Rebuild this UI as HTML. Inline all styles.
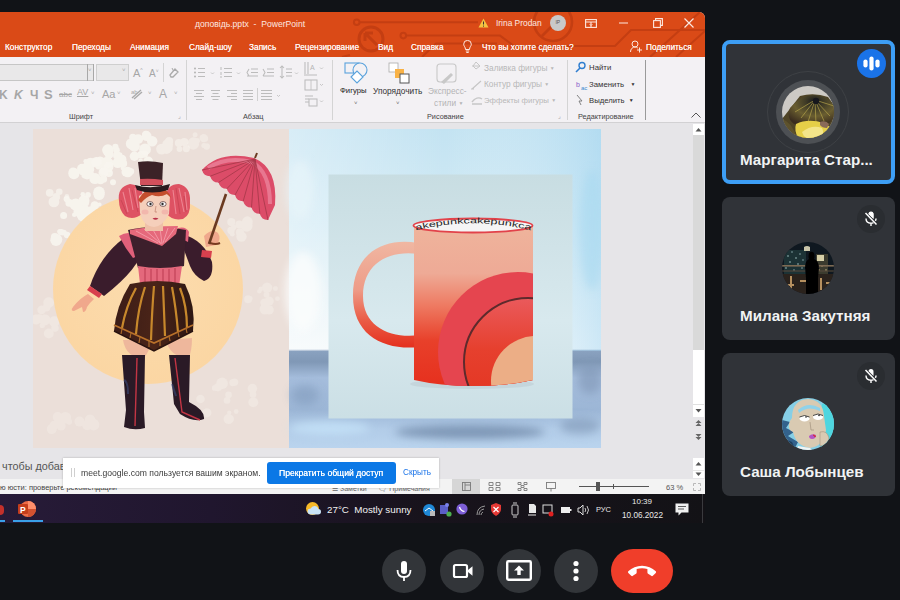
<!DOCTYPE html>
<html><head><meta charset="utf-8">
<style>
*{margin:0;padding:0;box-sizing:border-box}
html,body{width:900px;height:600px;overflow:hidden;background:#111317;font-family:"Liberation Sans",sans-serif}
.a{position:absolute}
#ppt{position:absolute;left:0;top:0;width:705px;height:494px;overflow:hidden}
#pptbg{position:absolute;left:0;top:12px;width:705px;height:482px;background:#e6e5e8;border-top-right-radius:6px}
#title{position:absolute;left:0;top:12px;width:705px;height:45px;background:#da4a17;border-top-right-radius:6px;overflow:hidden}
.tab{position:absolute;top:41px;font-size:8.3px;line-height:12px;color:#fff4ef;white-space:nowrap;text-shadow:0 0 0.5px #fff}
#ribbon{position:absolute;left:0;top:57px;width:705px;height:66px;background:#f3f1f4;border-bottom:1px solid #d2d1d3}
.rl{position:absolute;font-size:7.3px;color:#444;white-space:nowrap;line-height:10px}
.ch{font-size:5px;vertical-align:1px}
.gi{position:absolute;font-size:9px;color:#a6a6a6;white-space:nowrap}
.sep{position:absolute;width:1px;background:#d4d4d4}
#slide{position:absolute;left:33px;top:129px;width:568px;height:319px}
#status{position:absolute;left:0;top:479px;width:705px;height:15px;background:#f3f3f3}
#taskbar{position:absolute;left:0;top:494px;width:705px;height:29px;background:linear-gradient(90deg,#271b38 0%,#20162e 30%,#18131c 60%,#131216 100%)}
.tile{position:absolute;left:722px;width:173px;background:#303338;border-radius:8px}
.name{position:absolute;left:18px;font-size:14.5px;font-weight:bold;color:#f1f3f4;white-space:nowrap}
.btn{position:absolute;top:549px;width:44px;height:44px;border-radius:22px;background:#323539}
</style></head><body>

<div id="ppt">
  <div id="pptbg"></div>
  <div id="title">
    <svg class="a" style="left:0;top:0" width="705" height="45" viewBox="0 12 705 45" fill="none" stroke="#c43e12" stroke-width="2">
      <circle cx="356.7" cy="22.2" r="2.8"/><path d="M359.5 22.2H478"/>
      <circle cx="403.3" cy="35.6" r="2.8"/><path d="M406.1 35.6H500L514 46H615L631 30H705"/>
      <path d="M422 57L436 43.5H497"/>
      <path d="M342 57L350 55"/>
      <circle cx="371" cy="39" r="12" stroke-width="3"/><path d="M366 34l11 11M365 33v8M365 33h8" stroke-width="3"/>
      <circle cx="553" cy="22" r="19" stroke-width="2.6"/><path d="M542 36l20-20" stroke-width="2.6"/>
      <path d="M650 57L700 12"/>
      <path d="M676 57L705 31"/>
    </svg>
    <div class="a" style="left:195px;top:6px;font-size:8.6px;color:#fde8e0;white-space:nowrap;line-height:12px">доповідь.pptx&nbsp; - &nbsp;PowerPoint</div>
    <svg class="a" style="left:478px;top:6px" width="11" height="10" viewBox="0 0 11 10"><path d="M5.5 0.5L10.5 9.5H0.5Z" fill="#f5c242"/><path d="M5.5 3.5v3M5.5 7.6v1" stroke="#333" stroke-width="1"/></svg>
    <div class="a" style="left:496px;top:5px;font-size:8.4px;color:#fde8e0;white-space:nowrap;line-height:12px">Irina Prodan</div>
    <div class="a" style="left:550px;top:3px;width:15.5px;height:15.5px;border-radius:8px;background:#c9c9c9;font-size:5px;color:#555;text-align:center;line-height:15.5px">IP</div>
    <svg class="a" style="left:585px;top:7px" width="12" height="9" viewBox="0 0 12 9" fill="none" stroke="#fde8e0" stroke-width="1.1"><rect x="0.6" y="0.6" width="10.8" height="7.8"/><path d="M0.6 3h10.8M6 3v5.5" /><path d="M4.5 5l1.5 1.5 1.5-1.5" stroke-width="0.8"/></svg>
    <svg class="a" style="left:619px;top:10px" width="9" height="2"><path d="M0 1H9" stroke="#fde8e0" stroke-width="1.1"/></svg>
    <svg class="a" style="left:653px;top:6px" width="10" height="10" viewBox="0 0 10 10" fill="none" stroke="#fde8e0" stroke-width="1.1"><rect x="0.6" y="2.6" width="6.8" height="6.8"/><path d="M2.6 2.6V0.6h6.8v6.8H7.4"/></svg>
    <svg class="a" style="left:684px;top:6px" width="10" height="10" viewBox="0 0 10 10" fill="none" stroke="#fde8e0" stroke-width="1.2"><path d="M0.5 0.5l9 9M9.5 0.5l-9 9"/></svg>
  </div>
  <div class="tab" style="left:5px">Конструктор</div>
  <div class="tab" style="left:72px">Переходы</div>
  <div class="tab" style="left:130px">Анимация</div>
  <div class="tab" style="left:189px">Слайд-шоу</div>
  <div class="tab" style="left:249px">Запись</div>
  <div class="tab" style="left:295px">Рецензирование</div>
  <div class="tab" style="left:378px">Вид</div>
  <div class="tab" style="left:411px">Справка</div>
  <svg class="a" style="left:463px;top:40px" width="9" height="13" viewBox="0 0 9 13" fill="none" stroke="#fde8e0" stroke-width="1"><path d="M2.5 9.5C2.5 7 0.7 6.2 0.7 4.2a3.8 3.8 0 0 1 7.6 0c0 2-1.8 2.8-1.8 5.3zM2.8 11h3.4M3.3 12.5h2.4"/></svg>
  <div class="tab" style="left:482px">Что вы хотите сделать?</div>
  <svg class="a" style="left:630px;top:40px" width="13" height="13" viewBox="0 0 13 13" fill="none" stroke="#fde8e0" stroke-width="1"><circle cx="5" cy="4" r="3"/><path d="M0.5 12c0-3 2-5 4.5-5 1.2 0 2 .4 2.8 1M9.5 7.5v5M7 10h5"/></svg>
  <div class="tab" style="left:646px">Поделиться</div>
  <div id="ribbon"></div>
  <!-- font group -->
  <div class="a" style="left:-2px;top:64px;width:96px;height:17px;background:#e9e8e9;border:1px solid #c6c6c6;border-right:none"></div>
  <div class="a" style="left:87px;top:64px;width:1px;height:17px;background:#a8a8a8"></div>
  <div class="a" style="left:93px;top:64px;width:1px;height:17px;background:#a8a8a8"></div>
  <div class="a" style="left:96px;top:64px;width:33px;height:17px;background:#e9e8e9;border:1px solid #cfcfcf"></div>
  <div class="gi" style="left:88px;top:67px;font-size:6px">˅</div>
  <div class="gi" style="left:122px;top:67px;font-size:6px">˅</div>
  <div class="gi" style="left:133px;top:67px;font-size:11px">A<sup style="font-size:5px">^</sup></div>
  <div class="gi" style="left:149px;top:68px;font-size:10px">A<sup style="font-size:5px">˅</sup></div>
  <div class="sep" style="left:163px;top:63px;height:19px"></div>
  <svg class="a" style="left:169px;top:67px" width="11" height="11" viewBox="0 0 11 11" fill="none" stroke="#aaa" stroke-width="1.3"><path d="M1 8l5-6 3 3-5 5H2z"/><path d="M3 1l1.5 3" stroke-width="1"/></svg>
  <div class="gi" style="left:-1px;top:88px;font-size:12px;font-weight:bold">K</div>
  <div class="gi" style="left:14px;top:88px;font-size:12px;font-style:italic;font-weight:bold">K</div>
  <div class="gi" style="left:30px;top:88px;font-size:12px;font-weight:bold">Ч</div>
  <div class="gi" style="left:44px;top:87px;font-size:13px;font-weight:bold">S</div>
  <div class="gi" style="left:59px;top:90px;font-size:8px;text-decoration:line-through">abc</div>
  <div class="gi" style="left:77px;top:87px;font-size:9px;text-decoration:underline">AV</div>
  <div class="gi" style="left:91px;top:90px;font-size:6px">˅</div>
  <div class="gi" style="left:102px;top:88px;font-size:11px">Aa</div>
  <div class="gi" style="left:117px;top:90px;font-size:6px">˅</div>
  <svg class="a" style="left:130px;top:88px" width="13" height="12" viewBox="0 0 13 12" fill="none" stroke="#aaa" stroke-width="1.4"><path d="M2 10L11 2M4 11l8-7" /><text x="1" y="6" font-size="6" fill="#aaa" stroke="none" font-family="Liberation Sans">ab</text></svg>
  <div class="gi" style="left:148px;top:90px;font-size:6px">˅</div>
  <div class="gi" style="left:159px;top:87px;font-size:12px">A</div>
  <div class="gi" style="left:174px;top:90px;font-size:6px">˅</div>
  <div class="rl" style="left:69px;top:112px">Шрифт</div>
  <div class="gi" style="left:178px;top:112px;font-size:6px">⌟</div>
  <div class="sep" style="left:186px;top:60px;height:60px"></div>
  <!-- paragraph -->
  <svg class="a" style="left:190px;top:60px" width="145" height="60" viewBox="190 60 145 60" fill="none" stroke="#bcbcbc" stroke-width="1.05">
    <g fill="#b4b4b4" stroke="none"><circle cx="195" cy="68.5" r="1"/><circle cx="195" cy="72.5" r="1"/><circle cx="195" cy="76.5" r="1"/></g>
    <path d="M198 68.5h7M198 72.5h7M198 76.5h7"/>
    <path d="M211 72.5l1.5 1.5 1.5-1.5" stroke-width="0.8"/>
    <path d="M221 67v3M221 72v3M221 76v2" stroke-width="1"/>
    <path d="M224 68.5h8M224 72.5h8M224 76.5h8"/>
    <path d="M237 72.5l1.5 1.5 1.5-1.5" stroke-width="0.8"/>
    <path d="M251 69h7M251 72.5h7M247 76h11M249 69l-2 3.5 2 3.5"/>
    <path d="M267 69h7M267 72.5h7M263 76h11M263 69l2 3.5-2 3.5"/>
    <path d="M280 68l2-2 2 2M282 66v12M280 76l2 2 2-2M286 69h6M286 72.5h6M286 76h6"/>
    <path d="M295 72.5l1.5 1.5 1.5-1.5" stroke-width="0.8"/>
    <path d="M305 62v12M308 62v12M304 75h13"/><text x="310" y="70" font-size="7" fill="#b4b4b4" stroke="none" font-family="Liberation Sans">A</text>
    <path d="M320 67.5l1.5 1.5 1.5-1.5" stroke-width="0.8"/>
    <rect x="305" y="80" width="12" height="10"/><path d="M311 80v10" stroke-width="0.8"/>
    <path d="M320 84l1.5 1.5 1.5-1.5" stroke-width="0.8"/>
    <rect x="309" y="99" width="8" height="7"/><path d="M305 96h8M305 99h4M305 102h4"/>
    <path d="M320 100.5l1.5 1.5 1.5-1.5" stroke-width="0.8"/>
    <path d="M194 90.5h10M196 93.5h6M194 96.5h10M196 99.5h6"/>
    <path d="M211 90.5h9M212.5 93.5h6M211 96.5h9M212.5 99.5h6"/>
    <path d="M227 90.5h10M231 93.5h6M227 96.5h10M231 99.5h6"/>
    <path d="M243 90.5h10M243 93.5h10M243 96.5h10M243 99.5h10"/>
    <path d="M257.5 88v13" stroke="#d0d0d0"/>
    <path d="M261 90.5h11M261 93.5h11M261 96.5h11M261 99.5h11"/>
    <path d="M277 95l1.5 1.5 1.5-1.5" stroke-width="0.8"/>
  </svg>
  <div class="rl" style="left:243px;top:112px">Абзац</div>
  <div class="sep" style="left:332px;top:60px;height:60px"></div>
  <!-- drawing -->
  <svg class="a" style="left:340px;top:58px" width="230" height="64" viewBox="340 58 230 64" fill="none">
    <rect x="345" y="63" width="14" height="10" stroke="#5aa2dc" stroke-width="1.1"/>
    <circle cx="360" cy="70" r="7" stroke="#5aa2dc" stroke-width="1.1" fill="#f3f1f4"/>
    <path d="M351 77l6-6 6 6-6 6z" stroke="#5aa2dc" stroke-width="1.1" fill="#fff"/>
    <rect x="389" y="63" width="9" height="9" fill="#fff" stroke="#aaa" stroke-width="0.8"/>
    <rect x="395" y="69" width="9" height="9" fill="#f9b246"/>
    <rect x="400" y="74" width="9" height="9" fill="#fff" stroke="#555" stroke-width="1"/>
    <rect x="437" y="64" width="19" height="18" rx="3" stroke="#c8c8c8" stroke-width="1.1"/>
    <path d="M441 82l10-9 2 2-9 9z" fill="#c8c8c8"/>
    <path d="M476 62l4 4-4 3-3-3z M472 66h8" stroke="#c6c6c6" stroke-width="1"/>
    <path d="M472 89l9-8M471 89h3" stroke="#c6c6c6" stroke-width="1.2"/>
    <path d="M472 102c3-4 7-5 10-3M472 104h10" stroke="#c6c6c6" stroke-width="1.5"/>
  </svg>
  <div class="rl" style="left:340px;top:86px;font-size:7.7px;color:#222">Фигуры</div>
  <div class="rl" style="left:373px;top:86px;font-size:8.3px;color:#333">Упорядочить</div>
  <div class="rl" style="left:428px;top:86px;font-size:8.3px;color:#b4b4b4">Экспресс-</div>
  <div class="rl" style="left:434px;top:98px;font-size:8.3px;color:#b4b4b4">стили <span class="ch">▼</span></div>
  <div class="rl" style="left:354px;top:98px;font-size:6px;color:#666">˅</div>
  <div class="rl" style="left:396px;top:98px;font-size:6px;color:#666">˅</div>
  <div class="rl" style="left:484px;top:63px;font-size:8.3px;color:#b8b8b8">Заливка фигуры <span class="ch">▼</span></div>
  <div class="rl" style="left:484px;top:79px;font-size:8.3px;color:#b8b8b8">Контур фигуры <span class="ch">▼</span></div>
  <div class="rl" style="left:484px;top:95px;font-size:7.8px;color:#b8b8b8">Эффекты фигуры <span class="ch">▼</span></div>
  <div class="rl" style="left:427px;top:112px">Рисование</div>
  <div class="gi" style="left:558px;top:112px;font-size:6px">⌟</div>
  <div class="sep" style="left:567px;top:60px;height:60px"></div>
  <!-- editing -->
  <svg class="a" style="left:574px;top:60px" width="16" height="50" viewBox="574 60 16 50" fill="none">
    <circle cx="582" cy="65.5" r="3" stroke="#2f7ed0" stroke-width="1.4"/><path d="M580 68l-4 4" stroke="#2f7ed0" stroke-width="1.6"/>
    <text x="576" y="87" font-size="7" fill="#8a62c9" font-family="Liberation Sans">b</text><text x="581" y="90" font-size="6" fill="#3a8ad0" font-family="Liberation Sans">ac</text>
    <path d="M577 95l5 6h-3l2 4" stroke="#777" stroke-width="0.9"/>
  </svg>
  <div class="rl" style="left:589px;top:63px;font-size:7.8px;color:#333">Найти</div>
  <div class="rl" style="left:589px;top:79px;font-size:7.8px;color:#333">Заменить&nbsp;&nbsp;&nbsp;<span class="ch">▼</span></div>
  <div class="rl" style="left:589px;top:95px;font-size:7.7px;color:#333">Выделить&nbsp;&nbsp;<span class="ch">▼</span></div>
  <div class="rl" style="left:578px;top:112px">Редактирование</div>
  <div class="sep" style="left:645px;top:60px;height:60px;background:#9a9a9a"></div>
  <svg class="a" style="left:691px;top:112px" width="10" height="6"><path d="M0.5 5.5l4.5-4.5 4.5 4.5" fill="none" stroke="#555" stroke-width="1"/></svg>
  <svg id="slide" class="a" style="left:33px;top:129px" width="568" height="319" viewBox="33 129 568 319">
    <defs>
      <radialGradient id="sun" cx="0.5" cy="0.45" r="0.55"><stop offset="0" stop-color="#fcdcae"/><stop offset="1" stop-color="#fbd6a3"/></radialGradient>
      <linearGradient id="sky" x1="0" y1="0" x2="0" y2="1"><stop offset="0" stop-color="#c3e3f2"/><stop offset="0.3" stop-color="#d3ebf5"/><stop offset="0.55" stop-color="#e9f4f8"/><stop offset="0.69" stop-color="#f4f9fb"/><stop offset="0.695" stop-color="#8aa2c0"/><stop offset="0.73" stop-color="#8098b6"/><stop offset="0.78" stop-color="#a5bddc"/><stop offset="0.88" stop-color="#9cb6d6"/><stop offset="0.94" stop-color="#b2cce8"/><stop offset="1" stop-color="#bad4ee"/></linearGradient>
      <linearGradient id="skyh" x1="0" y1="0" x2="1" y2="0"><stop offset="0" stop-color="#ffffff" stop-opacity="0.35"/><stop offset="0.5" stop-color="#ffffff" stop-opacity="0"/><stop offset="1" stop-color="#9fd3f0" stop-opacity="0.45"/></linearGradient>
      <linearGradient id="photo" x1="0" y1="0" x2="0" y2="1"><stop offset="0" stop-color="#c8dde2"/><stop offset="0.6" stop-color="#d8e9ee"/><stop offset="1" stop-color="#cbdfe5"/></linearGradient>
      <linearGradient id="mug" x1="0" y1="0" x2="0" y2="1"><stop offset="0" stop-color="#efb49c"/><stop offset="0.3" stop-color="#eeaa96"/><stop offset="0.5" stop-color="#ee7a62"/><stop offset="0.72" stop-color="#e8402a"/><stop offset="1" stop-color="#e6301e"/></linearGradient>
      <linearGradient id="handle" x1="0" y1="0" x2="0" y2="1"><stop offset="0" stop-color="#f0b7a2"/><stop offset="0.45" stop-color="#ee9c88"/><stop offset="0.75" stop-color="#ea5a44"/><stop offset="1" stop-color="#e4301e"/></linearGradient>
      <linearGradient id="inner" x1="0" y1="0" x2="0" y2="1"><stop offset="0" stop-color="#ea5a5c"/><stop offset="0.4" stop-color="#e6402e"/><stop offset="1" stop-color="#e2301c"/></linearGradient>
      <clipPath id="mugclip"><path d="M414 225V380Q440 386 473 386Q506 386 533 380V225Z"/></clipPath>
      <linearGradient id="skirtg" x1="0" y1="0" x2="1" y2="0"><stop offset="0" stop-color="#3b1c17"/><stop offset="0.5" stop-color="#4a2418"/><stop offset="1" stop-color="#2e1713"/></linearGradient>
    </defs>
    <!-- clown image -->
    <rect x="33" y="129" width="256" height="319" fill="#ebdfd9"/>
    <filter id="soft" x="-20%" y="-20%" width="140%" height="140%"><feGaussianBlur stdDeviation="0.7"/></filter>
    <g fill="#f8f5ef" filter="url(#soft)">
      <g opacity="0.9">
        <circle cx="56.0" cy="240.2" r="5.7"/>
        <circle cx="56.3" cy="239.5" r="4.3"/>
        <circle cx="70.0" cy="244.6" r="4.5"/>
        <circle cx="67.1" cy="235.0" r="3.2"/>
        <circle cx="76.6" cy="242.9" r="4.8"/>
        <circle cx="79.4" cy="240.6" r="5.9"/>
        <circle cx="59.8" cy="231.5" r="2.6"/>
        <circle cx="76.1" cy="238.7" r="2.2"/>
        <circle cx="68.5" cy="242.6" r="2.1"/>
        <circle cx="56.9" cy="239.5" r="5.4"/>
        <circle cx="54.9" cy="237.0" r="4.0"/>
        <circle cx="61.1" cy="232.2" r="3.1"/>
        <circle cx="80.0" cy="237.9" r="5.4"/>
        <circle cx="63.9" cy="232.6" r="2.9"/>
      </g>
      <g opacity="0.95">
        <circle cx="78.6" cy="211.6" r="5.1"/>
        <circle cx="63.6" cy="215.5" r="3.5"/>
        <circle cx="99.6" cy="204.6" r="2.0"/>
        <circle cx="85.3" cy="220.9" r="3.9"/>
        <circle cx="93.8" cy="206.9" r="2.3"/>
        <circle cx="66.7" cy="199.0" r="3.1"/>
        <circle cx="90.8" cy="212.2" r="5.9"/>
        <circle cx="80.4" cy="203.2" r="3.0"/>
        <circle cx="84.3" cy="210.0" r="5.2"/>
        <circle cx="87.2" cy="217.4" r="3.8"/>
        <circle cx="86.9" cy="219.2" r="2.5"/>
        <circle cx="75.3" cy="204.2" r="3.7"/>
        <circle cx="82.6" cy="215.1" r="5.9"/>
        <circle cx="84.0" cy="200.7" r="5.5"/>
        <circle cx="83.4" cy="216.5" r="5.4"/>
        <circle cx="75.6" cy="204.6" r="6.0"/>
        <circle cx="82.6" cy="214.9" r="5.1"/>
        <circle cx="74.3" cy="214.7" r="2.3"/>
        <circle cx="94.2" cy="213.7" r="3.0"/>
        <circle cx="69.2" cy="202.9" r="3.8"/>
        <circle cx="94.8" cy="205.5" r="4.3"/>
        <circle cx="86.3" cy="203.5" r="2.6"/>
      </g>
      <g opacity="0.95">
        <circle cx="108.7" cy="169.1" r="3.0"/>
        <circle cx="99.0" cy="192.4" r="5.8"/>
        <circle cx="99.1" cy="194.6" r="5.5"/>
        <circle cx="80.6" cy="170.9" r="2.4"/>
        <circle cx="113.0" cy="182.3" r="3.0"/>
        <circle cx="88.9" cy="169.2" r="5.3"/>
        <circle cx="82.2" cy="172.4" r="2.7"/>
        <circle cx="90.9" cy="173.4" r="2.9"/>
        <circle cx="73.1" cy="171.9" r="4.5"/>
        <circle cx="88.0" cy="194.9" r="2.8"/>
        <circle cx="103.4" cy="179.0" r="3.8"/>
        <circle cx="100.6" cy="180.8" r="3.5"/>
        <circle cx="84.8" cy="175.1" r="3.4"/>
        <circle cx="108.9" cy="166.7" r="4.6"/>
        <circle cx="85.9" cy="165.2" r="2.6"/>
        <circle cx="94.9" cy="178.5" r="5.6"/>
        <circle cx="85.5" cy="161.2" r="2.1"/>
        <circle cx="82.0" cy="168.6" r="4.9"/>
        <circle cx="82.8" cy="194.3" r="2.3"/>
        <circle cx="73.9" cy="173.6" r="5.6"/>
        <circle cx="90.5" cy="163.0" r="5.2"/>
        <circle cx="103.2" cy="172.6" r="4.7"/>
        <circle cx="108.7" cy="168.2" r="3.7"/>
        <circle cx="97.2" cy="161.8" r="4.3"/>
        <circle cx="82.4" cy="170.1" r="4.3"/>
        <circle cx="87.2" cy="174.8" r="4.6"/>
      </g>
      <g opacity="0.95">
        <circle cx="148.2" cy="161.4" r="4.9"/>
        <circle cx="103.7" cy="170.8" r="4.3"/>
        <circle cx="98.1" cy="167.3" r="2.3"/>
        <circle cx="122.0" cy="159.2" r="4.4"/>
        <circle cx="108.7" cy="162.9" r="4.8"/>
        <circle cx="100.1" cy="162.2" r="5.7"/>
        <circle cx="121.9" cy="163.7" r="3.2"/>
        <circle cx="116.5" cy="155.5" r="2.7"/>
        <circle cx="140.9" cy="154.7" r="3.8"/>
        <circle cx="134.4" cy="156.2" r="4.7"/>
        <circle cx="127.8" cy="172.0" r="5.2"/>
        <circle cx="144.5" cy="154.3" r="3.5"/>
        <circle cx="108.3" cy="157.5" r="2.5"/>
        <circle cx="96.4" cy="162.3" r="5.4"/>
        <circle cx="115.4" cy="146.9" r="3.1"/>
        <circle cx="131.1" cy="171.4" r="3.1"/>
        <circle cx="126.0" cy="172.0" r="4.5"/>
        <circle cx="106.3" cy="162.3" r="5.4"/>
        <circle cx="140.7" cy="160.8" r="2.3"/>
        <circle cx="147.6" cy="164.9" r="2.2"/>
        <circle cx="116.6" cy="150.3" r="3.2"/>
        <circle cx="123.0" cy="159.9" r="2.5"/>
        <circle cx="117.8" cy="162.7" r="5.3"/>
        <circle cx="122.8" cy="168.0" r="2.2"/>
        <circle cx="109.1" cy="154.2" r="4.5"/>
        <circle cx="107.9" cy="150.1" r="5.8"/>
        <circle cx="117.0" cy="155.5" r="3.9"/>
        <circle cx="123.3" cy="163.5" r="3.9"/>
        <circle cx="119.4" cy="155.4" r="3.1"/>
        <circle cx="108.8" cy="173.0" r="4.1"/>
      </g>
      <g opacity="0.9">
        <circle cx="132.8" cy="137.4" r="3.6"/>
        <circle cx="145.5" cy="134.6" r="2.3"/>
        <circle cx="152.8" cy="139.2" r="2.5"/>
        <circle cx="131.4" cy="143.8" r="5.6"/>
        <circle cx="134.4" cy="146.2" r="5.5"/>
        <circle cx="145.9" cy="134.6" r="3.9"/>
        <circle cx="138.3" cy="139.1" r="4.9"/>
        <circle cx="146.7" cy="136.2" r="4.9"/>
        <circle cx="145.0" cy="149.4" r="5.9"/>
        <circle cx="152.2" cy="141.2" r="5.2"/>
      </g>
      <g opacity="0.7">
        <circle cx="53.9" cy="201.9" r="5.4"/>
        <circle cx="56.3" cy="196.9" r="3.8"/>
        <circle cx="49.7" cy="192.8" r="3.9"/>
        <circle cx="66.9" cy="196.3" r="2.3"/>
        <circle cx="59.3" cy="191.8" r="3.3"/>
        <circle cx="58.9" cy="192.1" r="2.6"/>
      </g>
      <g opacity="0.6">
        <circle cx="161.5" cy="149.1" r="5.4"/>
        <circle cx="169.2" cy="141.0" r="4.0"/>
        <circle cx="179.5" cy="149.1" r="2.9"/>
        <circle cx="166.5" cy="149.1" r="4.9"/>
        <circle cx="167.6" cy="144.5" r="5.4"/>
        <circle cx="166.7" cy="147.9" r="3.5"/>
        <circle cx="183.6" cy="142.2" r="2.8"/>
        <circle cx="184.3" cy="142.1" r="4.1"/>
        <circle cx="168.6" cy="148.0" r="4.1"/>
        <circle cx="162.6" cy="149.8" r="2.1"/>
        <circle cx="186.3" cy="148.6" r="3.6"/>
        <circle cx="178.8" cy="142.9" r="4.0"/>
      </g>
      <g opacity="0.45">
        <circle cx="203.7" cy="138.1" r="4.2"/>
        <circle cx="193.3" cy="144.0" r="5.7"/>
        <circle cx="203.8" cy="145.5" r="2.5"/>
        <circle cx="193.4" cy="142.9" r="5.6"/>
        <circle cx="197.2" cy="140.7" r="2.8"/>
        <circle cx="195.1" cy="134.8" r="2.5"/>
        <circle cx="205.4" cy="138.8" r="2.8"/>
        <circle cx="206.7" cy="146.6" r="3.3"/>
      </g>
      <g opacity="0.45">
        <circle cx="232.3" cy="234.2" r="2.4"/>
        <circle cx="239.3" cy="224.5" r="4.0"/>
        <circle cx="240.0" cy="232.4" r="4.1"/>
        <circle cx="231.0" cy="230.4" r="3.7"/>
        <circle cx="233.7" cy="227.3" r="2.8"/>
        <circle cx="231.3" cy="222.1" r="4.1"/>
        <circle cx="247.4" cy="221.7" r="5.4"/>
        <circle cx="241.5" cy="236.6" r="5.2"/>
        <circle cx="247.4" cy="224.8" r="3.3"/>
        <circle cx="246.6" cy="225.8" r="6.0"/>
      </g>
      <g opacity="0.35">
        <circle cx="266.5" cy="294.8" r="3.0"/>
        <circle cx="260.8" cy="288.9" r="2.4"/>
        <circle cx="267.1" cy="287.6" r="5.2"/>
        <circle cx="269.1" cy="309.9" r="4.7"/>
        <circle cx="269.1" cy="301.1" r="4.7"/>
        <circle cx="275.4" cy="288.6" r="2.5"/>
        <circle cx="248.1" cy="299.3" r="4.0"/>
        <circle cx="259.3" cy="291.2" r="2.3"/>
        <circle cx="264.4" cy="302.6" r="4.2"/>
        <circle cx="250.0" cy="298.5" r="2.6"/>
        <circle cx="264.9" cy="309.1" r="5.4"/>
        <circle cx="277.4" cy="298.7" r="2.4"/>
      </g>
      <g opacity="0.35">
        <circle cx="55.0" cy="328.1" r="3.8"/>
        <circle cx="46.5" cy="307.5" r="3.9"/>
        <circle cx="39.5" cy="318.6" r="4.4"/>
        <circle cx="54.3" cy="321.5" r="5.4"/>
        <circle cx="48.8" cy="333.5" r="5.0"/>
        <circle cx="42.3" cy="325.4" r="2.7"/>
        <circle cx="44.8" cy="319.8" r="5.6"/>
        <circle cx="48.7" cy="302.5" r="5.4"/>
        <circle cx="41.6" cy="309.8" r="4.4"/>
        <circle cx="36.1" cy="319.4" r="5.2"/>
      </g>
      <g opacity="0.35">
        <circle cx="228.5" cy="419.1" r="5.0"/>
        <circle cx="234.7" cy="382.2" r="3.6"/>
        <circle cx="252.4" cy="388.6" r="4.8"/>
        <circle cx="232.8" cy="382.6" r="3.6"/>
        <circle cx="228.6" cy="394.8" r="3.4"/>
        <circle cx="227.0" cy="400.4" r="3.4"/>
        <circle cx="214.7" cy="387.9" r="2.9"/>
        <circle cx="253.0" cy="394.4" r="3.4"/>
        <circle cx="217.8" cy="387.3" r="4.1"/>
        <circle cx="206.9" cy="412.8" r="4.6"/>
        <circle cx="222.1" cy="383.4" r="5.9"/>
        <circle cx="253.3" cy="402.2" r="5.0"/>
        <circle cx="229.2" cy="412.7" r="2.2"/>
        <circle cx="236.2" cy="411.5" r="2.4"/>
        <circle cx="229.8" cy="419.0" r="4.2"/>
        <circle cx="200.5" cy="399.0" r="4.3"/>
      </g>
      <g opacity="0.3">
        <circle cx="90.0" cy="419.6" r="5.2"/>
        <circle cx="87.2" cy="425.3" r="5.0"/>
        <circle cx="93.1" cy="424.0" r="2.6"/>
        <circle cx="59.9" cy="421.1" r="4.0"/>
        <circle cx="65.4" cy="417.7" r="5.8"/>
        <circle cx="54.1" cy="425.2" r="4.4"/>
        <circle cx="61.1" cy="426.0" r="4.6"/>
        <circle cx="57.6" cy="417.0" r="4.9"/>
        <circle cx="69.2" cy="421.7" r="3.0"/>
        <circle cx="79.5" cy="421.6" r="5.0"/>
        <circle cx="51.8" cy="429.1" r="5.0"/>
        <circle cx="93.6" cy="424.6" r="5.8"/>
      </g>
    </g>
    <circle cx="148" cy="289" r="95" fill="url(#sun)"/>
    <!-- left arm -->
    <path d="M124 238Q138 232 144 246Q140 268 104 296L90 286Q100 256 124 238Z" fill="#3a1c2c"/>
    <path d="M119 236q10-6 17 0l2 20-5 2q-8-10-14-22z" fill="#e0607a"/>
    <path d="M90 286l12 8l-3 4l-12-8z" fill="#d8404e"/>
    <path d="M88 294q-8 4-15 13q-3 4 1 4l8-4l1 5q3 0 4-5l3-4 4-4z" fill="#f0a88c"/>
    <!-- right arm -->
    <path d="M182 234Q204 240 212 262Q214 278 204 281Q194 276 190 266L184 250Z" fill="#3a1c2c"/>
    <path d="M178 228q8-2 11 4l-1 10-8-4z" fill="#e0607a"/>
    <path d="M202 250l10 1l-1 7l-10-1z" fill="#d8404e"/>
    <path d="M204 236q8-8 14-3q4 6-2 12l-10 2z" fill="#f0a88c"/>
    <path d="M210 243q6 2 10 0" stroke="#7a3a20" stroke-width="2"/>
    <!-- umbrella -->
    <path d="M226 194L209 244" stroke="#6b3a20" stroke-width="2.6"/>
    <path d="M202 170Q220 150 254 158Q278 168 275 205L268 220Q261.5 220.1 259.8 213.8Q253.2 213.8 251.5 207.5Q245.0 207.6 243.2 201.2Q236.7 201.3 235.0 195.0Q228.5 195.1 226.8 188.8Q220.2 188.8 218.5 182.5Q212.0 182.6 210.2 176.2Q203.7 176.3 202.0 170.0Z" fill="#dc4c68"/>
    <path d="M208 168Q226 156 252 162Q270 172 270 204" fill="none" stroke="#f29ab0" stroke-width="4" opacity="0.55"/>
    <path d="M255 159L268.0 220.0M255 159L259.8 213.8M255 159L251.5 207.5M255 159L243.2 201.2M255 159L235.0 195.0M255 159L226.8 188.8M255 159L218.5 182.5M255 159L210.2 176.2M255 159L202.0 170.0" stroke="#a8384a" stroke-width="1" fill="none" opacity="0.85"/>
    <path d="M255 158l2-5" stroke="#6b3a20" stroke-width="2"/>
    <!-- torso -->
    <path d="M128 230Q154 224 186 230L184 266Q162 272 138 268Z" fill="#3d1f2c"/>
    <!-- corset -->
    <path d="M138 266Q160 270 182 266L178 293H141Z" fill="#e4687c"/>
    <g stroke="#b7354c" stroke-width="0.9"><path d="M145 268v24M151 269v24M157 269v24M163 269v24M169 269v24M175 268v24"/></g>
    <!-- ruff -->
    <path d="M130 230Q150 226 178 226L176 234L162 246Q146 240 130 234Z" fill="#e5697b"/>
    <g stroke="#f6a3b0" stroke-width="1" opacity="0.8"><path d="M136 231l22 12M144 229l16 14M152 228l9 16M160 228l2 16M168 228l-5 15M175 228l-10 14"/></g>
    <!-- thighs -->
    <path d="M123 340Q126 358 144 358Q150 350 152 340Z" fill="#eeb79c"/>
    <path d="M166 340Q170 358 189 357Q192 350 192 338Z" fill="#eeb79c"/>
    <!-- skirt -->
    <path d="M130 284Q157 278 185 284Q196 306 193 331L154 351L114 331Q116 306 130 284Z" fill="url(#skirtg)"/>
    <g stroke="#c7882c" stroke-width="2.2" fill="none"><path d="M136 288Q126 306 122 328M145 287Q138 308 136 334M154 286Q152 310 151 340M163 286Q164 310 165 336M172 287Q176 308 178 332M180 288Q187 306 187 328"/></g>
    <path d="M114 325L154 343L193 325" stroke="#b8702a" stroke-width="1.6" fill="none"/>
    <path d="M114 331L154 351L193 331" stroke="#2a1410" stroke-width="1.5" fill="none"/>
    <g stroke="#a9692a" stroke-width="1.2"><path d="M122 329l-1 5M131 333l-1 5M140 337l-1 6M149 341l0 6M160 340l0 6M169 336l1 5M178 332l1 5M186 328l1 5"/></g>
    <!-- boots -->
    <path d="M122 355H145L144 412L145 428Q134 431 124 427L126 410Z" fill="#2a1a26"/>
    <path d="M124 380q4 2 4 14" stroke="#3a4a7a" stroke-width="2" opacity="0.6"/>
    <path d="M137 358L135 426" stroke="#c33544" stroke-width="1.4"/>
    <path d="M169 355H190L189 402Q205 410 204 419Q194 423 180 414L174 404Z" fill="#2a1a26"/>
    <path d="M172 384q2 6 4 12" stroke="#3a4a7a" stroke-width="2" opacity="0.6"/>
    <path d="M175 358L182 412l18 8" stroke="#c33544" stroke-width="1.4" fill="none"/>
    <!-- head -->
    <path d="M119 201Q117 187 130 184Q141 185 143 195L142 214Q133 221 125 216Q119 210 119 201Z" fill="#de5263"/>
    <path d="M166 196Q167 184 179 184Q191 187 190 202Q191 215 183 219Q172 221 167 214Z" fill="#de5263"/>
    <g stroke="#f49aa6" stroke-width="1.1" opacity="0.7"><path d="M123 192l5 20M129 188l4 22M135 188l3 20M173 190l3 24M179 188l5 24M185 192l2 18"/></g>
    <g stroke="#b83848" stroke-width="0.8" opacity="0.6"><path d="M121 200l6 14M132 190l6 22M176 188l4 26M184 196l2 16"/></g>
    <path d="M145 222h18v9h-18z" fill="#efc0a8"/>
    <path d="M139 196Q154 184 170 196L169 214Q162 227 154 227Q143 226 140 213Z" fill="#f5cfbb"/>
    <ellipse cx="145" cy="212" rx="3.5" ry="2.5" fill="#f0a0a0" opacity="0.5"/><ellipse cx="165" cy="212" rx="3.5" ry="2.5" fill="#f0a0a0" opacity="0.5"/>
    <path d="M138 200Q146 186 158 187Q168 188 171 198L167 194Q160 198 152 195Q146 197 141 203Z" fill="#c44e2e"/>
    <ellipse cx="150" cy="204" rx="3.2" ry="2.4" fill="#fff" stroke="#4a2a2a" stroke-width="0.7"/><ellipse cx="163" cy="204" rx="3.2" ry="2.4" fill="#fff" stroke="#4a2a2a" stroke-width="0.7"/>
    <circle cx="150.5" cy="204" r="1.2" fill="#2a2a2a"/><circle cx="162.5" cy="204" r="1.2" fill="#2a2a2a"/>
    <path d="M156 206l-1 6h2" stroke="#c08070" stroke-width="0.7" fill="none"/>
    <path d="M152.5 218.5q3 -1.5 6 0q-3 2.5-6 0z" fill="#b8324a"/>
    <!-- hat -->
    <path d="M138 162Q150 160 163 163L162 186H141Z" fill="#3b2227"/>
    <path d="M140 179Q151 178 163 180L163 185H140Z" fill="#d2505c"/>
    <path d="M135 185Q152 190 170 184L168 190Q152 195 137 190Z" fill="#2a1a1e"/>

    <!-- mug image -->
    <rect x="289" y="129" width="312" height="319" fill="url(#sky)"/>
    <rect x="289" y="129" width="312" height="222" fill="url(#skyh)"/>
    <filter id="blur4" x="-50%" y="-50%" width="200%" height="200%"><feGaussianBlur stdDeviation="4"/></filter>
    <g filter="url(#blur4)">
      <ellipse cx="303" cy="292" rx="18" ry="40" fill="#fbfdfd" opacity="0.8"/>
      <ellipse cx="300" cy="190" rx="14" ry="30" fill="#e9f5fa" opacity="0.6"/>
      <ellipse cx="592" cy="230" rx="12" ry="60" fill="#a9d8f0" opacity="0.6"/>
      <ellipse cx="470" cy="432" rx="75" ry="7" fill="#6e86a6" opacity="0.75"/>
      <ellipse cx="330" cy="428" rx="40" ry="7" fill="#c4e2f8" opacity="0.8"/>
      <ellipse cx="580" cy="426" rx="20" ry="8" fill="#7e96b6" opacity="0.6"/>
      <ellipse cx="305" cy="395" rx="14" ry="10" fill="#7d96b8" opacity="0.5"/>
      <ellipse cx="590" cy="380" rx="12" ry="14" fill="#7f95b4" opacity="0.6"/>
    </g>
    <rect x="328.5" y="174.5" width="244" height="244" fill="url(#photo)"/>
    <ellipse cx="472" cy="384" rx="62" ry="5" fill="#c2d2d8" opacity="0.8"/>
    <!-- handle -->
    <path d="M418 243C385 237 353 252 353 296C353 336 385 351 420 347L420 335C392 339 363 328 363 296C363 264 388 250 418 254Z" fill="url(#handle)"/>
    <!-- body -->
    <path d="M414 225V380Q440 386 473 386Q506 386 533 380V225Z" fill="url(#mug)"/>
    <g clip-path="url(#mugclip)">
      <circle cx="518" cy="352" r="80" fill="#e5454f"/>
      <circle cx="528" cy="362" r="64" fill="url(#inner)" stroke="#5e2a2c" stroke-width="2"/>
      <circle cx="536" cy="381" r="45" fill="#ecae86"/>
    </g>
    <ellipse cx="473" cy="225.5" rx="59.5" ry="7" fill="#f5f5f5" stroke="#e2424a" stroke-width="1.8"/>
    <path id="rimtext" d="M416 230.5Q473 216 531 230.5" fill="none"/>
    <text font-size="8" fill="#262626" font-family="Liberation Sans"><textPath href="#rimtext" textLength="116" lengthAdjust="spacingAndGlyphs">akepunkcakepunkca</textPath></text>
  </svg>
  <div id="status"></div>
  <div class="a" style="left:2px;top:459px;font-size:10.8px;color:#555;white-space:nowrap;line-height:14px">чтобы добав</div>
  <div class="a" style="left:0px;top:483px;font-size:7.5px;color:#444;white-space:nowrap;line-height:10px">ю юсти: проверьте рекомендации</div>
  <div class="a" style="left:332px;top:484px;font-size:7px;color:#666;white-space:nowrap;line-height:10px">☰ Заметки&nbsp;&nbsp;&nbsp;&nbsp;&nbsp;&nbsp;🗨 Примечания</div>
  <div class="a" style="left:452px;top:479px;width:28px;height:15px;background:#d6d6d6"></div>
  <svg class="a" style="left:460px;top:481px" width="100" height="11" viewBox="460 481 100 11" fill="none" stroke="#7a7a7a" stroke-width="0.9">
    <rect x="462.5" y="482.5" width="8" height="8"/><path d="M465 482.5v8M465 485h5.5"/>
    <path d="M489 482.5h4v3h-4zM496 482.5h4v3h-4zM489 487.5h4v3h-4zM496 487.5h4v3h-4z"/>
    <path d="M518 482.5h3v2h-3zM524 482.5h3v2h-3zM518 488.5h3v2h-3zM524 488.5h3v2h-3zM521 485.5h3v2h-3z"/>
    <rect x="546.5" y="482.5" width="9" height="6"/><path d="M551 488.5v3"/>
  </svg>
  <div class="a" style="left:579px;top:486px;width:70px;height:1px;background:#555"></div>
  <div class="a" style="left:596px;top:482px;width:4px;height:9px;background:#555"></div>
  <div class="a" style="left:613px;top:484px;width:1px;height:5px;background:#555"></div>
  <div class="a" style="left:666px;top:483px;font-size:7.5px;color:#555;white-space:nowrap;line-height:10px">63 %</div>
  <svg class="a" style="left:693px;top:483px" width="8" height="8" viewBox="0 0 8 8" fill="none" stroke="#aaa" stroke-width="0.8"><path d="M0.5 3V0.5H3M5 0.5h2.5V3M7.5 5v2.5H5M3 7.5H0.5V5"/></svg>
  <!-- scrollbar -->
  <div class="a" style="left:693px;top:124px;width:11px;height:293px;background:#fff"></div>
  <div class="a" style="left:693px;top:135px;width:11px;height:215px;background:#d9d9d9"></div>
  <div class="a" style="left:693px;top:404px;width:11px;height:1px;background:#e0e0e0"></div>
  <div class="a" style="left:693px;top:458px;width:11px;height:20px;background:#fff"></div>
  <div class="a" style="left:693px;top:470px;width:11px;height:1px;background:#e6e6e6"></div>
  <svg class="a" style="left:693px;top:124px" width="11" height="354" viewBox="693 124 11 354" fill="#555">
    <path d="M695.5 131.5l3-3.5 3 3.5z"/>
    <path d="M695.5 409l3 3.5 3-3.5z"/>
    <path d="M695.5 423l3-3 3 3zM695.5 426l3-3 3 3z" fill="#666"/>
    <path d="M695.5 434l3 3 3-3zM695.5 437l3 3 3-3z" fill="#666"/>
    <path d="M695.5 465.5l3-3.5 3 3.5z"/>
    <path d="M695.5 472.5l3 3.5 3-3.5z"/>
  </svg>
</div>
<!-- popup -->
<div class="a" style="left:63px;top:458px;width:376px;height:30px;background:#fff;box-shadow:0 0 2px rgba(0,0,0,0.25)"></div>
<div class="a" style="left:71px;top:468px;width:1px;height:9px;background:#cfcfcf"></div>
<div class="a" style="left:74px;top:468px;width:1px;height:9px;background:#cfcfcf"></div>
<div class="a" style="left:81px;top:467px;font-size:8.6px;color:#3c3c3c;white-space:nowrap;line-height:12px">meet.google.com пользуется вашим экраном.</div>
<div class="a" style="left:267px;top:462px;width:129px;height:22px;background:#0b78e6;border-radius:3px"></div>
<div class="a" style="left:279px;top:467px;font-size:8.6px;color:#fff;white-space:nowrap;line-height:12px;text-shadow:0 0 0.4px #fff">Прекратить общий доступ</div>
<div class="a" style="left:403px;top:467px;font-size:8.2px;color:#1a73e8;white-space:nowrap;line-height:12px">Скрыть</div>
<!-- taskbar -->
<div id="taskbar"></div>
<div class="a" style="left:-4px;top:505px;width:8px;height:10px;border-radius:4px;background:#c4312b"></div>
<div class="a" style="left:0px;top:520px;width:5px;height:2px;background:#3aa0e8"></div>
<svg class="a" style="left:17px;top:500px" width="20" height="18" viewBox="0 0 20 18">
  <circle cx="11" cy="9" r="8" fill="#ed6c47"/>
  <path d="M11 1a8 8 0 0 1 8 8h-8z" fill="#ff8f6b"/>
  <path d="M11 9h8a8 8 0 0 1-8 8z" fill="#d35230"/>
  <rect x="1" y="4" width="10" height="10" rx="1" fill="#c43e1c"/>
  <text x="3" y="12.5" font-size="8.5" font-weight="bold" fill="#fff" font-family="Liberation Sans">P</text>
</svg>
<div class="a" style="left:13px;top:520px;width:30px;height:2px;background:#3aa0e8"></div>
<svg class="a" style="left:305px;top:501px" width="17" height="16" viewBox="0 0 17 16">
  <circle cx="7.5" cy="7.5" r="6.5" fill="#f7b928"/>
  <path d="M6 13.5q-3.5 0-3.5-3t3.2-3q1-2.6 3.8-2.6 3.2 0 3.8 3.2 2.7.2 2.7 2.7 0 2.7-2.9 2.7z" fill="#c9e3f5"/>
</svg>
<div class="a" style="left:327px;top:504px;font-size:9.8px;color:#f2f2f2;white-space:nowrap;line-height:12px">27°C&nbsp; Mostly sunny</div>
<svg class="a" style="left:420px;top:500px" width="180" height="20" viewBox="420 500 180 20">
  <circle cx="429" cy="510" r="6" fill="#1e88d6"/><path d="M425 511l4-3 4 3" stroke="#fff" stroke-width="1" fill="none"/><rect x="430" y="511" width="5" height="5" fill="#bbb"/>
  <rect x="440" y="505" width="8" height="9" fill="#5b5fc7"/><circle cx="447" cy="505" r="2" fill="#7b83eb"/><circle cx="449" cy="514" r="2.6" fill="#4caf50"/>
  <circle cx="462" cy="509" r="5.6" fill="#7d5ed6"/><path d="M459.5 507q1 4 5 4.5" stroke="#fff" stroke-width="1.2" fill="none"/>
  <path d="M477 515q0-8 8-9M479 515q0-5 5-6M481 515q0-2 2-3" stroke="#9a9a9a" stroke-width="1" fill="none"/>
  <path d="M491 505l5-2 5 2v4q0 4-5 7q-5-3-5-7z" fill="#e53935"/><path d="M493.5 507l5 5M498.5 507l-5 5" stroke="#fff" stroke-width="1.2"/>
  <rect x="512" y="505" width="6" height="10" rx="1" fill="none" stroke="#ccc" stroke-width="1"/><path d="M513 503h4M513 517h4" stroke="#ccc"/>
  <path d="M529 504h5l2 2v7h-7z" fill="#e8e8e8"/><path d="M528 515h8" stroke="#e8e8e8"/>
  <rect x="543" y="505" width="9" height="8" fill="none" stroke="#ddd" stroke-width="1"/><circle cx="551" cy="514" r="2.5" fill="#e02020"/>
  <rect x="561" y="507" width="9" height="6" fill="#eee"/><rect x="570" y="509" width="1.5" height="2" fill="#eee"/>
  <path d="M578 508h2l3-3v10l-3-3h-2z" fill="none" stroke="#ddd" stroke-width="1"/><path d="M585 508q1.5 2 0 4M587 506q3 4 0 8" stroke="#ddd" stroke-width="0.9" fill="none"/>
</svg>
<div class="a" style="left:596px;top:504px;font-size:7.5px;color:#e8e8e8;white-space:nowrap;line-height:12px">РУС</div>
<div class="a" style="left:632px;top:496px;font-size:8px;color:#eaeaea;white-space:nowrap;line-height:12px">10:39</div>
<div class="a" style="left:622px;top:509.5px;font-size:8.2px;color:#eaeaea;white-space:nowrap;line-height:12px">10.06.2022</div>
<svg class="a" style="left:675px;top:503px" width="14" height="13" viewBox="0 0 14 13"><path d="M0.5 0.5h13v9h-7l-3 3v-3h-3z" fill="#f0f0f0"/><path d="M3 3.5h8M3 6h6" stroke="#333" stroke-width="0.8"/></svg>
<div class="a" style="left:702px;top:494px;width:1px;height:29px;background:#3a3a3e"></div>

<div class="tile" style="top:40px;height:144px;border:4.5px solid #3d9ef5"></div>
<div class="tile" style="top:197px;height:143px"></div>
<div class="tile" style="top:353px;height:143px"></div>
<!-- tile 1 -->
<div class="a" style="left:767px;top:71px;width:82px;height:82px;border-radius:50%;border:1.5px solid #3e4145"></div>
<div class="a" style="left:776px;top:80px;width:64px;height:64px;border-radius:50%;background:#4d5054"></div>
<svg class="a" style="left:782px;top:86px" width="52" height="52" viewBox="782 86 52 52">
  <defs><clipPath id="av1"><circle cx="808" cy="112" r="26"/></clipPath>
  <radialGradient id="crest" cx="0.55" cy="0.2" r="0.75"><stop offset="0" stop-color="#15161c"/><stop offset="0.25" stop-color="#3e3a26"/><stop offset="0.6" stop-color="#6a5e30"/><stop offset="1" stop-color="#3a2c1e"/></radialGradient></defs>
  <g clip-path="url(#av1)">
    <rect x="782" y="86" width="52" height="52" fill="#cdcac5"/>
    <path d="M782 119L800 96Q814 92 828 97L836 108V140H782Z" fill="#4f4426"/>
    <path d="M790 108Q800 95 815 95Q832 97 836 110Q834 122 824 126Q808 130 794 124Q786 118 790 108Z" fill="url(#crest)"/>
    <g stroke="#b3a24a" stroke-width="1" opacity="0.7"><path d="M815 100l-20 12M815 100l-14 18M815 100l-7 22M815 100l1 24M815 100l9 21M815 100l15 16M815 100l19 6"/></g>
    <circle cx="816" cy="101" r="3.2" fill="#16171d"/>
    <path d="M796 124Q808 118 824 123Q834 128 834 138H798Q794 130 796 124Z" fill="#e6cf48"/>
    <path d="M802 132Q812 124 822 128Q826 136 816 140Q804 140 802 132Z" fill="#f4e58a"/>
    <path d="M782 119Q792 122 797 138H782Z" fill="#5e522c"/>
    <path d="M820 122q6-2 9 2l-2 4q-5 0-7-3z" fill="#8a6a58"/>
  </g>
</svg>
<div class="name" style="left:740px;top:151px;line-height:18px;font-size:15.2px">Маргарита Стар...</div>
<svg class="a" style="left:857px;top:49px" width="29" height="29" viewBox="0 0 29 29">
  <circle cx="14.5" cy="14.5" r="14.5" fill="#1a73e8"/>
  <rect x="6.4" y="10.5" width="4.2" height="8" rx="2.1" fill="#fff"/>
  <rect x="12.4" y="7.5" width="4.2" height="14" rx="2.1" fill="#fff"/>
  <rect x="18.4" y="10.5" width="4.2" height="8" rx="2.1" fill="#fff"/>
</svg>
<!-- tile 2 -->
<svg class="a" style="left:782px;top:242px" width="52" height="52" viewBox="782 242 52 52">
  <defs><clipPath id="av2"><circle cx="808" cy="268" r="26"/></clipPath>
  <filter id="b2" x="-10%" y="-10%" width="120%" height="120%"><feGaussianBlur stdDeviation="0.7"/></filter></defs>
  <g clip-path="url(#av2)">
    <rect x="782" y="242" width="52" height="52" fill="#0f1820"/>
    <g filter="url(#b2)">
    <rect x="784" y="250" width="22" height="24" fill="#1d3036"/>
    <g fill="#9fc4c0"><circle cx="788" cy="256" r="0.8"/><circle cx="792" cy="252" r="0.7"/><circle cx="796" cy="258" r="0.8"/><circle cx="800" cy="254" r="0.7"/><circle cx="790" cy="262" r="0.8"/><circle cx="798" cy="264" r="0.8"/><circle cx="803" cy="260" r="0.7"/><circle cx="786" cy="268" r="0.8"/><circle cx="794" cy="270" r="0.7"/><circle cx="802" cy="268" r="0.7"/></g>
    <path d="M804 247q3-2 6 0l0 4-6 0z" fill="#c8c4a8"/>
    <rect x="816" y="254" width="12" height="20" fill="#3a3a2e"/>
    <rect x="817" y="255" width="7" height="6" fill="#d6d0a8"/>
    <g fill="#d0c088"><circle cx="822" cy="266" r="0.8"/><circle cx="826" cy="270" r="0.8"/><circle cx="819" cy="270" r="0.7"/></g>
    <rect x="782" y="265" width="52" height="1.6" fill="#7d6a52"/>
    <rect x="782" y="270.5" width="52" height="1" fill="#5a4a3a"/>
    <rect x="782" y="274" width="52" height="20" fill="#2b241e"/>
    <g fill="#cfa36a" opacity="0.85"><rect x="790" y="276" width="2" height="14"/><rect x="800" y="280" width="8" height="2"/><rect x="820" y="278" width="2" height="12"/><rect x="826" y="282" width="6" height="2"/><rect x="786" y="284" width="8" height="2"/></g>
    <rect x="806" y="287" width="10" height="3" fill="#b83a2a"/>
    <path d="M809 253q2.5-2.5 5 0q1 4 0 6q5 2 5 9l-1 10v16h-12v-16l-1-10q0-7 4-9q-1-2 0-6z" fill="#050506"/>
    </g>
  </g>
</svg>
<div class="name" style="left:740px;top:307px;line-height:18px;font-size:15.2px">Милана Закутняя</div>
<svg class="a" style="left:857px;top:205px" width="28" height="28" viewBox="0 0 28 28">
  <circle cx="14" cy="14" r="14" fill="#2a2d31"/>
  <path d="M11.5 9a2.5 2.5 0 0 1 5 0v4.5" stroke="#fff" stroke-width="0" fill="#fff"/>
  <path d="M11.5 9.5a2.5 2.5 0 0 1 5 0v4.6l-5-5z" fill="#fff"/>
  <path d="M9 13.5q0 4.5 5 4.8q1.5 0 2.5-.6M19 13.5q0 1.4-.6 2.4M14 18.3v2.7" stroke="#fff" stroke-width="1.4" fill="none"/>
  <path d="M8.5 8l11 11.5" stroke="#fff" stroke-width="1.5"/>
</svg>
<!-- tile 3 -->
<svg class="a" style="left:782px;top:398px" width="52" height="52" viewBox="782 398 52 52">
  <defs><clipPath id="av3"><circle cx="808" cy="424" r="26"/></clipPath></defs>
  <g clip-path="url(#av3)">
    <rect x="782" y="398" width="52" height="52" fill="#86cfe6"/>
    <path d="M822 404l12 -4v50h-14l4-16-4-10z" fill="#4fd6df"/>
    <path d="M782 420l8 2-4 6 8 4-6 4 10 6-4 8h-12z" fill="#33628c"/>
    <path d="M782 438l10 4 4 8h-14z" fill="#1f3f5e"/>
    <path d="M792 418Q792 400 808 399Q823 400 824 416L826 430Q824 446 810 448Q796 446 793 432Q788 430 789 424Q790 420 792 418Z" fill="#d9cab2"/>
    <path d="M798 410Q808 401 820 408L820 411Q808 405 799 413Z" fill="#8fd2ea"/>
    <ellipse cx="804.5" cy="418.5" rx="5" ry="3" fill="#fff"/>
    <ellipse cx="818" cy="417" rx="5" ry="3" fill="#fff"/>
    <path d="M799.5 417q5-3 10 0M813 415.5q5-3 10 0" stroke="#333" stroke-width="0.9" fill="none"/>
    <circle cx="806" cy="417" r="0.8" fill="#222"/><circle cx="819" cy="415.5" r="0.8" fill="#222"/>
    <path d="M810 422l1 8h3" stroke="#9a8a76" stroke-width="0.6" fill="none"/>
    <path d="M809 436q3-3 7-1q0 4-4 4q-3 0-3-3z" fill="#b455c4"/><path d="M813 435q2 0 2.5 2" stroke="#e0303a" stroke-width="1.2"/>
    <path d="M820 432q7-2 9 6q-1 7-9 8z" fill="#d9cab2" stroke="#9a8a76" stroke-width="0.5"/>
    <path d="M798 446l12 2 4 4h-18z" fill="#f0f4f4"/>
  </g>
</svg>
<div class="name" style="left:740px;top:463px;line-height:18px;font-size:15.2px">Саша Лобынцев</div>
<svg class="a" style="left:857px;top:361.5px" width="28" height="28" viewBox="0 0 28 28">
  <circle cx="14" cy="14" r="14" fill="#2a2d31"/>
  <path d="M11.5 9.5a2.5 2.5 0 0 1 5 0v4.6l-5-5z" fill="#fff"/>
  <path d="M9 13.5q0 4.5 5 4.8q1.5 0 2.5-.6M19 13.5q0 1.4-.6 2.4M14 18.3v2.7" stroke="#fff" stroke-width="1.4" fill="none"/>
  <path d="M8.5 8l11 11.5" stroke="#fff" stroke-width="1.5"/>
</svg>
<!-- controls -->
<div class="btn" style="left:382px"></div>
<div class="btn" style="left:440px"></div>
<div class="btn" style="left:497px"></div>
<div class="btn" style="left:554px"></div>
<div class="btn" style="left:611px;width:62px;background:#f03e2a"></div>
<svg class="a" style="left:382px;top:549px" width="44" height="44" viewBox="0 0 44 44">
  <rect x="19" y="12" width="6" height="13" rx="3" fill="#fff"/>
  <path d="M15.5 21q0 7 6.5 7t6.5-7" stroke="#fff" stroke-width="1.8" fill="none"/><path d="M22 28v4" stroke="#fff" stroke-width="1.8"/>
</svg>
<svg class="a" style="left:440px;top:549px" width="44" height="44" viewBox="0 0 44 44">
  <rect x="14" y="16" width="13" height="12" rx="1.5" stroke="#fff" stroke-width="2.2" fill="none"/>
  <path d="M28 21l4.5-3.8v9.6l-4.5-3.8z" fill="#fff"/>
</svg>
<svg class="a" style="left:497px;top:549px" width="44" height="44" viewBox="0 0 44 44">
  <rect x="10.2" y="12.2" width="23.6" height="18.6" rx="1.2" stroke="#fff" stroke-width="2.4" fill="none"/>
  <path d="M22 16.5l-5 5h3.3v4.5h3.4v-4.5h3.3z" fill="#fff"/>
</svg>
<svg class="a" style="left:554px;top:549px" width="44" height="44" viewBox="0 0 44 44">
  <circle cx="22" cy="14.5" r="2.6" fill="#fff"/><circle cx="22" cy="22" r="2.6" fill="#fff"/><circle cx="22" cy="29.5" r="2.6" fill="#fff"/>
</svg>
<svg class="a" style="left:611px;top:549px" width="62" height="44" viewBox="0 0 62 44">
  <g transform="translate(17 8.6) scale(1.17)"><path d="M12 9c-1.6 0-3.15.25-4.6.72v3.1c0 .39-.23.74-.56.9-.98.49-1.87 1.12-2.66 1.85-.18.18-.43.28-.7.28-.28 0-.53-.11-.71-.29L.29 13.08c-.18-.17-.29-.42-.29-.7 0-.28.11-.53.29-.71C3.34 8.78 7.46 7 12 7s8.66 1.78 11.71 4.670c.18.18.29.43.29.71 0 .28-.11.53-.29.71l-2.48 2.48c-.18.18-.43.29-.71.29-.27 0-.52-.11-.7-.28-.79-.74-1.690-1.36-2.67-1.85-.33-.16-.56-.5-.56-.9v-3.1C15.15 9.25 13.6 9 12 9z" fill="#fff"/></g>
</svg>

</body></html>
